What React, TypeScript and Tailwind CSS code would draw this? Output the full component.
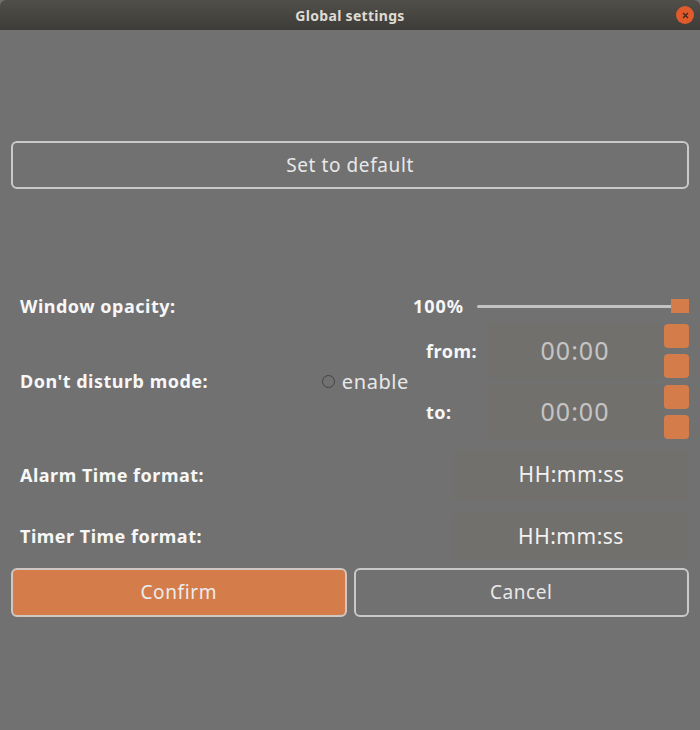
import React from "react";

function Spin() {
  return <div className="w-[25px] h-[24px] rounded-[4px] bg-[#d57c4b]" />;
}

function TimeField({ label }: { label: string }) {
  return (
    <div className="flex items-center h-[56px]">
      <div className="w-[61px] text-[18px] font-bold tracking-[0.5px] text-[#f7f7f7]">{label}</div>
      <div className="w-[176px] h-[56px] rounded-[6px] bg-[#72706d] flex items-center justify-center text-[25px] text-[#c4c4c4] tracking-[1px]">
        00:00
      </div>
      <div className="flex flex-col gap-[6px] ml-[1px]">
        <Spin />
        <Spin />
      </div>
    </div>
  );
}

export default function App() {
  return (
    <div
      className="w-[700px] h-[730px] bg-[#717171] flex flex-col"
      style={{ fontFamily: '"Noto Sans", "Open Sans", sans-serif' }}
    >
      <div className="h-[30px] shrink-0 bg-gradient-to-b from-[#514f4a] to-[#3e3c38] rounded-t-[6px] flex items-center justify-center relative">
        <span className="text-[14px] font-bold tracking-[0.3px] text-[#dfdbd2]">Global settings</span>
        <div className="absolute right-[6px] top-[6px] w-[18px] h-[18px] rounded-full bg-[#e05a2b] flex items-center justify-center">
          <svg width="7" height="7" viewBox="0 0 7 7">
            <path d="M1 1L6 6M6 1L1 6" stroke="#3a2a20" strokeWidth="1.3" />
          </svg>
        </div>
      </div>
      <div className="px-[11px] flex flex-col">
        <button className="mt-[111px] h-[48px] w-full rounded-[6px] border-2 border-[#c9c9c9] text-[19px] tracking-[0.6px] text-[#e8e8e8]">
          Set to default
        </button>

        <div className="mt-[107px] h-[20px] flex items-center">
          <div className="pl-[9px] text-[18px] font-bold tracking-[0.5px] text-[#f7f7f7] flex-1">Window opacity:</div>
          <div className="text-[18px] font-bold tracking-[1px] text-[#f7f7f7]">100%</div>
          <div className="ml-[13px] w-[212px] h-[16px] relative flex items-center">
            <div className="w-full h-[3px] bg-[#c3c3c3] rounded" />
            <div className="absolute right-0 top-[1px] w-[18px] h-[14px] bg-[#d57c4b]" />
          </div>
        </div>

        <div className="mt-[7px] h-[117px] flex items-center">
          <div className="pl-[9px] text-[18px] font-bold tracking-[0.5px] text-[#f7f7f7] flex-1">Don't disturb mode:</div>
          <div className="flex items-center gap-[7px] mr-[17px]">
            <div className="w-[13px] h-[13px] rounded-full border border-[#444]" />
            <span className="text-[20px] tracking-[0.6px] text-[#e8e8e8]">enable</span>
          </div>
          <div className="flex flex-col gap-[5px]">
            <TimeField label="from:" />
            <TimeField label="to:" />
          </div>
        </div>

        <div className="mt-[10px] h-[50px] flex items-center">
          <div className="pl-[9px] text-[18px] font-bold tracking-[0.5px] text-[#f7f7f7] flex-1">Alarm Time format:</div>
          <div className="w-[235px] h-[50px] rounded-[6px] bg-[#72706d] flex items-center justify-center text-[21px] tracking-[0.5px] text-[#f2f2f2]">
            HH:mm:ss
          </div>
        </div>

        <div className="mt-[12px] h-[49px] flex items-center">
          <div className="pl-[9px] text-[18px] font-bold tracking-[0.5px] text-[#f7f7f7] flex-1">Timer Time format:</div>
          <div className="w-[236px] h-[49px] rounded-[6px] bg-[#72706d] flex items-center justify-center text-[21px] tracking-[0.5px] text-[#f2f2f2]">
            HH:mm:ss
          </div>
        </div>

        <div className="mt-[7px] flex gap-[7px]">
          <button className="flex-1 h-[49px] rounded-[6px] border-2 border-[#d0c7c2] bg-[#d57c4b] text-[19px] tracking-[0.6px] text-[#ececec]">
            Confirm
          </button>
          <button className="flex-1 h-[49px] rounded-[6px] border-2 border-[#c9c9c9] text-[19px] tracking-[0.6px] text-[#e8e8e8]">
            Cancel
          </button>
        </div>
      </div>
    </div>
  );
}
